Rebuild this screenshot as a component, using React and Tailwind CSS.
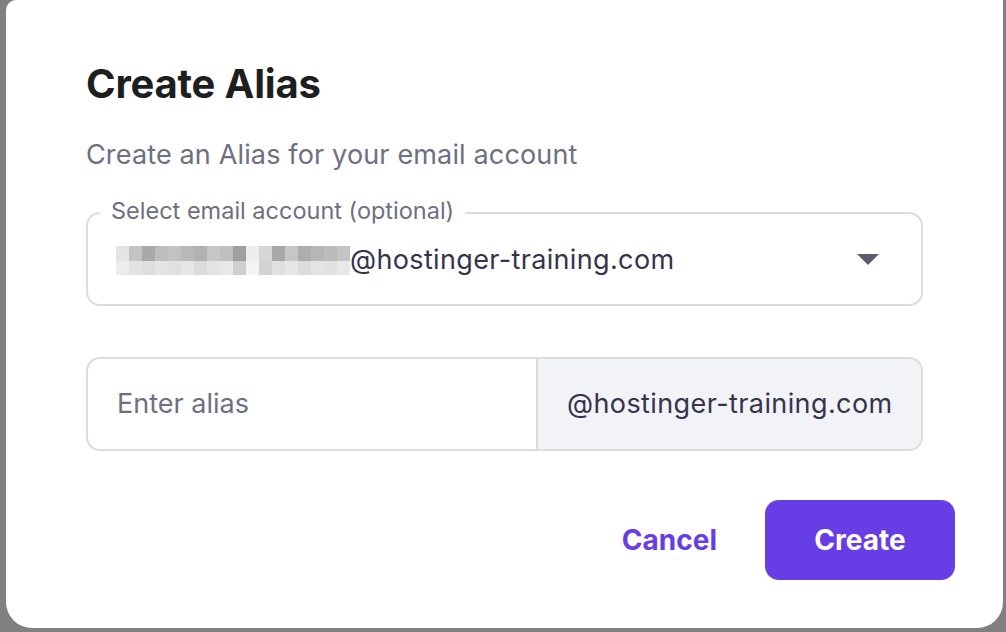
import React from "react";

const blurTop = [
  "#e4e4e4", "#c4c4c4", "#a9a9a9", "#bdbdbd", "#c2c2c2", "#b9b9b9", "#b2b2b2", "#c6c6c6", "#c0c0c0", "#a0a0a0",
  "#eeeeee", "#d6d6d6", "#a8a8a8", "#c6c6c6", "#adadad", "#b6b6b6", "#bcbcbc", "#c4c4c4",
];
const blurBot = [
  "#ececec", "#e2e2e2", "#dedede", "#e4e4e4", "#e0e0e0", "#e6e6e6", "#dcdcdc", "#e4e4e4", "#e8e8e8", "#cfcfcf",
  "#f4f4f4", "#d2d2d2", "#e0e0e0", "#e6e6e6", "#dddddd", "#e4e4e4", "#e2e2e2", "#e8e8e8",
];

function Pixelated() {
  return (
    <div className="flex flex-col">
      <div className="flex">
        {blurTop.map((c, i) => (
          <div key={i} className="w-[13px] h-[15px]" style={{ backgroundColor: c }} />
        ))}
      </div>
      <div className="flex">
        {blurBot.map((c, i) => (
          <div key={i} className="w-[13px] h-[14px]" style={{ backgroundColor: c }} />
        ))}
      </div>
    </div>
  );
}

export default function App() {
  return (
    <div
      className="w-[1006px] h-[632px] bg-[#808081] flex pl-[6px] pr-[3px] pb-[4px] overflow-hidden"
      style={{ fontFamily: "Inter, 'Noto Sans', sans-serif" }}
    >
      <div className="flex-1 bg-white rounded-b-[26px] rounded-tl-[10px] px-[80px] pt-[60px] flex flex-col">
        <h1 className="text-[40px] leading-[48px] font-bold text-[#1d1e20] tracking-[-0.2px]">Create Alias</h1>
        <p className="mt-[29px] text-[27px] leading-[36px] tracking-[0.15px] text-[#6d7081]">Create an Alias for your email account</p>

        <div className="relative mt-[39px] h-[94px] border-2 border-[#dadce0] rounded-[14px] flex items-center pl-[28px] pr-[42px]">
          <span className="absolute -top-[18px] left-[12px] bg-white px-[11px] text-[23.5px] leading-[30px] text-[#6d7081]">
            Select email account (optional)
          </span>
          <div className="flex items-center flex-1 mt-[2px]">
            <Pixelated />
            <span className="text-[27px] leading-[36px] tracking-[0.35px] text-[#36344d]">@hostinger-training.com</span>
          </div>
          <svg width="22" height="12" viewBox="0 0 22 12" className="shrink-0 mt-[2px]">
            <path d="M0 0 H22 L11 11 Z" fill="#5b5c70" />
          </svg>
        </div>

        <div className="mt-[51px] h-[94px] border-2 border-[#dadce0] rounded-[14px] flex overflow-hidden">
          <div className="w-[448px] flex items-center pl-[29px] text-[27px] text-[#6d7081]">Enter alias</div>
          <div className="flex-1 border-l-2 border-[#dadce0] bg-[#f2f3f6] flex items-center pl-[29px] text-[27px] tracking-[0.4px] text-[#36344d]">
            @hostinger-training.com
          </div>
        </div>

        <div className="mt-[49px] mr-[-32px] flex justify-end items-center gap-[48px]">
          <button className="text-[28px] font-bold text-[#673de6]">Cancel</button>
          <button className="w-[190px] h-[80px] rounded-[14px] bg-[#673de6] text-white text-[28px] font-bold">
            Create
          </button>
        </div>
      </div>
    </div>
  );
}
